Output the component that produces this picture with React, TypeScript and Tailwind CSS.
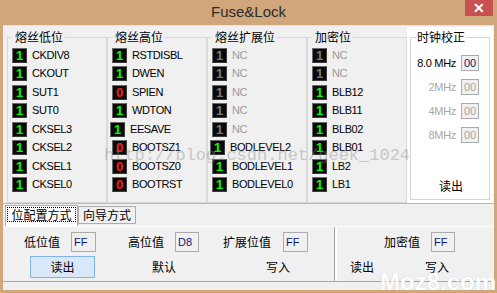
import React from "react";

type Bit = { v: "0" | "1"; label: string; nc?: boolean; shift?: boolean };

const latin = { fontFamily: '"Liberation Sans", Arial, sans-serif' };
const cjk = { fontFamily: '"Noto Sans CJK SC", "Liberation Sans", sans-serif' };

function Led({ v, nc }: { v: string; nc?: boolean }) {
  const color = nc ? "text-[#7a7a7a]" : v === "1" ? "text-[#00ff00]" : "text-[#ff1a1a]";
  return (
    <div
      className={`w-[15px] h-[15px] shrink-0 bg-[#0a0a0a] border border-t-[#6a6a6a] border-l-[#6a6a6a] border-b-[#3a3a3a] border-r-[#3a3a3a] flex items-center justify-center text-[13px] font-bold leading-none ${color}`}
      style={latin}
    >
      {v}
    </div>
  );
}

function Group({ title, bits }: { title: string; bits: Bit[] }) {
  return (
    <fieldset className="w-[100px] h-[173px] shrink-0 border border-[#d9d9d9] rounded-none">
      <legend className="ml-[5px] px-[2px] text-[12px] leading-[14px] text-black" style={cjk}>
        {title}
      </legend>
      <div className="flex flex-col gap-[3.43px] pt-[4px] pl-[4px]">
        {bits.map((b, i) => (
          <div key={i} className={`flex items-center h-[15px] ${b.shift ? "-ml-[2px]" : ""}`}>
            <Led v={b.v} nc={b.nc} />
            <span
              className={`ml-[5px] text-[11px] tracking-[-0.4px] leading-none ${b.nc ? "text-[#9a9a9a]" : "text-black"}`}
              style={latin}
            >
              {b.label}
            </span>
          </div>
        ))}
      </div>
    </fieldset>
  );
}

const g1: Bit[] = ["CKDIV8", "CKOUT", "SUT1", "SUT0", "CKSEL3", "CKSEL2", "CKSEL1", "CKSEL0"].map((l) => ({ v: "1", label: l }));
const g2: Bit[] = [
  { v: "1", label: "RSTDISBL" },
  { v: "1", label: "DWEN" },
  { v: "0", label: "SPIEN" },
  { v: "1", label: "WDTON" },
  { v: "1", label: "EESAVE", shift: true },
  { v: "0", label: "BOOTSZ1" },
  { v: "0", label: "BOOTSZ0" },
  { v: "0", label: "BOOTRST" },
];
const g3: Bit[] = [
  { v: "1", label: "NC", nc: true },
  { v: "1", label: "NC", nc: true },
  { v: "1", label: "NC", nc: true },
  { v: "1", label: "NC", nc: true },
  { v: "1", label: "NC", nc: true },
  { v: "1", label: "BODLEVEL2", shift: true },
  { v: "1", label: "BODLEVEL1" },
  { v: "1", label: "BODLEVEL0" },
];
const g4: Bit[] = [
  { v: "1", label: "NC", nc: true },
  { v: "1", label: "NC", nc: true },
  { v: "1", label: "BLB12" },
  { v: "1", label: "BLB11" },
  { v: "1", label: "BLB02" },
  { v: "1", label: "BLB01" },
  { v: "1", label: "LB2" },
  { v: "1", label: "LB1" },
];

function Box({ text, disabled, w = "w-[25px]", h = "h-[20px]" }: { text: string; disabled?: boolean; w?: string; h?: string }) {
  return (
    <div
      className={`${w} ${h} shrink-0 border border-[#ababab] bg-[#f0f0f0] flex items-center pl-[2px] text-[11px] leading-none ${disabled ? "text-[#a8a8a8]" : "text-[#0c1a70]"}`}
      style={latin}
    >
      {text}
    </div>
  );
}

function ClockRow({ label, disabled }: { label: string; disabled?: boolean }) {
  return (
    <div className="flex items-center justify-end h-[16px] pr-[10px]">
      <span className={`text-[11px] tracking-[-0.3px] leading-none mr-[5px] ${disabled ? "text-[#a8a8a8]" : "text-black"}`} style={latin}>
        {label}
      </span>
      <Box text="00" disabled={disabled} w="w-[18px]" h="h-[16px]" />
    </div>
  );
}

export default function App() {
  return (
    <div className="relative w-[497px] h-[293px] bg-[#d0a77b] flex flex-col overflow-hidden">
      {/* title bar */}
      <div className="relative h-[25px] shrink-0 flex items-center justify-center">
        <span className="text-[15px] text-[#2b2b2b] leading-none -mt-[3px]" style={latin}>
          Fuse&amp;Lock
        </span>
        <div className="absolute right-[4px] top-0 w-[28px] h-[16px] bg-[#c75050] flex items-center justify-center text-white text-[14px] font-bold leading-none" style={latin}>
          ✕
        </div>
      </div>

      {/* client */}
      <div className="mx-[3px] mb-[3px] flex-1 bg-[#f0f0f0] flex flex-col">
        {/* top area */}
        <div className="h-[178px] shrink-0 flex border-t border-[#e4e4e4]">
          <div className="flex pl-[4px] pt-[4px]">
            <Group title="熔丝低位" bits={g1} />
            <Group title="熔丝高位" bits={g2} />
            <Group title="熔丝扩展位" bits={g3} />
            <Group title="加密位" bits={g4} />
          </div>
          <div className="w-[86px] h-[176px] mt-[1px] ml-[0px] bg-white px-[3px] pt-[3px]">
            <fieldset className="h-[170px] border border-[#d5d5d5] rounded-none flex flex-col">
              <legend className="ml-[5px] px-[1px] text-[12px] leading-[14px] text-black" style={cjk}>
                时钟校正
              </legend>
              <div className="flex flex-col gap-[8px] pt-[11px]">
                <ClockRow label="8.0 MHz" />
                <ClockRow label="2MHz" disabled />
                <ClockRow label="4MHz" disabled />
                <ClockRow label="8MHz" disabled />
              </div>
              <div className="mt-[37px] text-center text-[12px] leading-none pl-[2px]" style={cjk}>
                读出
              </div>
            </fieldset>
          </div>
        </div>
        <div className="h-px bg-[#b9b9b9] shrink-0" />

        {/* tab strip */}
        <div className="h-[22px] shrink-0 flex items-end pl-[2px]">
          <div className="w-[73px] h-[21px] bg-white border border-b-0 border-[#adadad] p-[1px] pb-[4px]">
            <div className="h-full border border-dotted border-black flex items-center justify-center text-[12px] leading-none" style={cjk}>
              位配置方式
            </div>
          </div>
          <div className="w-[58px] h-[18px] mb-[2px] bg-[#f0f0f0] border border-[#adadad] flex items-center justify-center text-[12px] leading-none" style={cjk}>
            向导方式
          </div>
        </div>
        <div className="h-px bg-white shrink-0" />

        {/* tab panel */}
        <div className="h-[55px] shrink-0 flex border-b border-[#a5a5a5]">
          <div className="w-[332px] shrink-0 border-r border-[#a0a0a0] flex flex-col">
            <div className="flex items-center h-[20px] mt-[5px] text-[12px]" style={cjk}>
              <span className="ml-[21px] w-[36px]">低位值</span>
              <span className="ml-[11px]"><Box text="FF" /></span>
              <span className="ml-[32px] w-[36px]">高位值</span>
              <span className="ml-[11px]"><Box text="D8" w="w-[24px]" /></span>
              <span className="ml-[24px] w-[48px]">扩展位值</span>
              <span className="ml-[12px]"><Box text="FF" /></span>
            </div>
            <div className="flex items-center h-[22px] mt-[4px] text-[12px]" style={cjk}>
              <div className="ml-[27px] w-[65px] h-[22px] bg-[#d9e8f8] border border-[#7eb4ea] flex items-center justify-center">读出</div>
              <span className="ml-[57px]">默认</span>
              <span className="ml-[90px]">写入</span>
            </div>
          </div>
          <div className="w-[2px] bg-white shrink-0" />
          <div className="flex-1 flex flex-col">
            <div className="flex items-center h-[20px] mt-[5px] text-[12px]" style={cjk}>
              <span className="ml-[47px] w-[36px]">加密值</span>
              <span className="ml-[11px]"><Box text="FF" w="w-[24px]" /></span>
            </div>
            <div className="flex items-center h-[22px] mt-[4px] text-[12px]" style={cjk}>
              <span className="ml-[13px]">读出</span>
              <span className="ml-[51px]">写入</span>
            </div>
          </div>
        </div>
        <div className="flex-1" />
      </div>

      {/* watermarks */}
      <div
        className="absolute left-[104px] top-[147px] text-[17px] leading-none text-[#8a8a8a] opacity-40 pointer-events-none whitespace-nowrap"
        style={{ fontFamily: '"Liberation Mono", "Courier New", monospace' }}
      >
        http://blog.csdn.net/geek_1024
      </div>
      <div
        className="absolute left-[380px] top-[270px] text-[24px] font-bold leading-none text-white pointer-events-none whitespace-nowrap [text-shadow:0_0_1px_#bbbbbb]"
        style={latin}
      >
        Moz8.com
      </div>
    </div>
  );
}
